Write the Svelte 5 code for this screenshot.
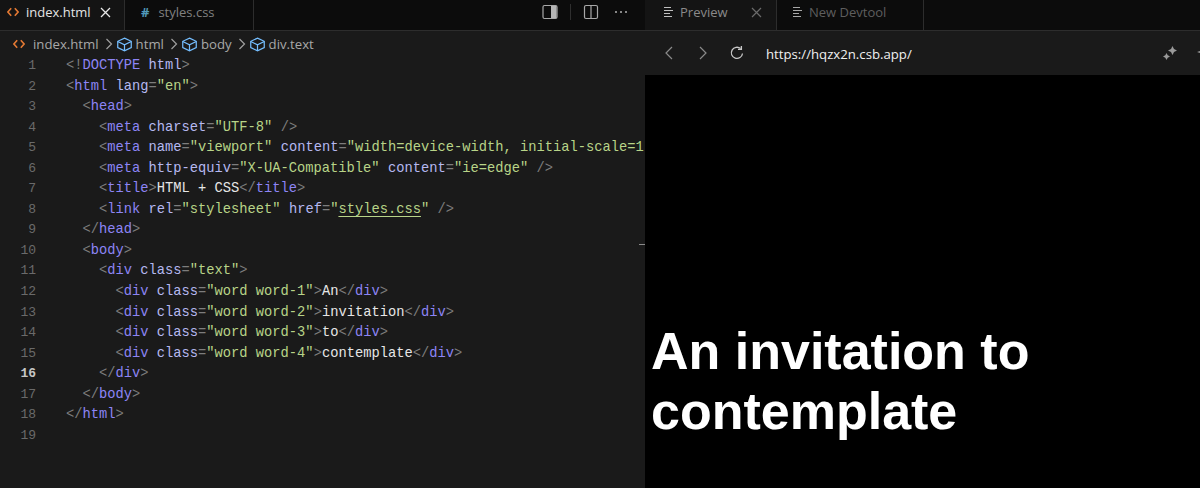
<script lang="ts">
	// token kinds: p punctuation, t tag, a attribute, s string, x plain text, u underlined string
	type Tok = [string, string];
	const lines: { indent: number; toks: Tok[] }[] = [
		{ indent: 0, toks: [['p', '<!'], ['t', 'DOCTYPE'], ['x', ' '], ['a', 'html'], ['p', '>']] },
		{ indent: 0, toks: [['p', '<'], ['t', 'html'], ['x', ' '], ['a', 'lang'], ['p', '='], ['s', '"en"'], ['p', '>']] },
		{ indent: 1, toks: [['p', '<'], ['t', 'head'], ['p', '>']] },
		{ indent: 2, toks: [['p', '<'], ['t', 'meta'], ['x', ' '], ['a', 'charset'], ['p', '='], ['s', '"UTF-8"'], ['x', ' '], ['p', '/>']] },
		{ indent: 2, toks: [['p', '<'], ['t', 'meta'], ['x', ' '], ['a', 'name'], ['p', '='], ['s', '"viewport"'], ['x', ' '], ['a', 'content'], ['p', '='], ['s', '"width=device-width, initial-scale=1.0"'], ['x', ' '], ['p', '/>']] },
		{ indent: 2, toks: [['p', '<'], ['t', 'meta'], ['x', ' '], ['a', 'http-equiv'], ['p', '='], ['s', '"X-UA-Compatible"'], ['x', ' '], ['a', 'content'], ['p', '='], ['s', '"ie=edge"'], ['x', ' '], ['p', '/>']] },
		{ indent: 2, toks: [['p', '<'], ['t', 'title'], ['p', '>'], ['x', 'HTML + CSS'], ['p', '</'], ['t', 'title'], ['p', '>']] },
		{ indent: 2, toks: [['p', '<'], ['t', 'link'], ['x', ' '], ['a', 'rel'], ['p', '='], ['s', '"stylesheet"'], ['x', ' '], ['a', 'href'], ['p', '='], ['s', '"'], ['u', 'styles.css'], ['s', '"'], ['x', ' '], ['p', '/>']] },
		{ indent: 1, toks: [['p', '</'], ['t', 'head'], ['p', '>']] },
		{ indent: 1, toks: [['p', '<'], ['t', 'body'], ['p', '>']] },
		{ indent: 2, toks: [['p', '<'], ['t', 'div'], ['x', ' '], ['a', 'class'], ['p', '='], ['s', '"text"'], ['p', '>']] },
		{ indent: 3, toks: [['p', '<'], ['t', 'div'], ['x', ' '], ['a', 'class'], ['p', '='], ['s', '"word word-1"'], ['p', '>'], ['x', 'An'], ['p', '</'], ['t', 'div'], ['p', '>']] },
		{ indent: 3, toks: [['p', '<'], ['t', 'div'], ['x', ' '], ['a', 'class'], ['p', '='], ['s', '"word word-2"'], ['p', '>'], ['x', 'invitation'], ['p', '</'], ['t', 'div'], ['p', '>']] },
		{ indent: 3, toks: [['p', '<'], ['t', 'div'], ['x', ' '], ['a', 'class'], ['p', '='], ['s', '"word word-3"'], ['p', '>'], ['x', 'to'], ['p', '</'], ['t', 'div'], ['p', '>']] },
		{ indent: 3, toks: [['p', '<'], ['t', 'div'], ['x', ' '], ['a', 'class'], ['p', '='], ['s', '"word word-4"'], ['p', '>'], ['x', 'contemplate'], ['p', '</'], ['t', 'div'], ['p', '>']] },
		{ indent: 2, toks: [['p', '</'], ['t', 'div'], ['p', '>']] },
		{ indent: 1, toks: [['p', '</'], ['t', 'body'], ['p', '>']] },
		{ indent: 0, toks: [['p', '</'], ['t', 'html'], ['p', '>']] },
		{ indent: 0, toks: [] }
	];
	const crumbs = ['html', 'body', 'div.text'];
</script>

{#snippet listIcon()}
	<svg class="list-icon" width="10" height="10" viewBox="0 0 10 10" fill="none" stroke="currentColor" stroke-width="1">
		<path d="M0 .5h7M0 3.5h9M0 6.5h6M0 9.5h8" />
	</svg>
{/snippet}

{#snippet cube()}
	<svg class="cube" width="17" height="15" viewBox="0 0 18 16" fill="none" stroke="#75beff" stroke-width="1.3">
		<path d="M9 1.2 16.2 4.6v6.6L9 14.8 1.8 11.2V4.6Z" />
		<path d="M1.8 4.8 9 8.4l7.2-3.6M9 8.4v6.2" />
	</svg>
{/snippet}

{#snippet chevron()}
	<svg class="crumb-sep" width="8" height="14" viewBox="0 0 8 14" fill="none" stroke="#a0a0a0" stroke-width="1.2">
		<path d="M1.5 2l5 5-5 5" />
	</svg>
{/snippet}

{#snippet htmlIcon()}
	<svg width="12" height="10" viewBox="0 0 12 10" fill="none" stroke="#e37933" stroke-width="1.6">
		<path d="M4.2 1.2.9 5l3.3 3.8M7.8 1.2 11.1 5 7.8 8.8" />
	</svg>
{/snippet}

<div class="window">
	<section class="editor">
		<header class="tabbar">
			<div class="tab active">
				{@render htmlIcon()}
				<span class="tab-name">index.html</span>
				<svg class="close" width="11" height="11" viewBox="0 0 11 11" stroke="#e8e8e8" stroke-width="1.3"><path d="M1 1l9 9M10 1l-9 9" /></svg>
			</div>
			<div class="tab">
				<span class="hash">#</span>
				<span class="tab-name dim">styles.css</span>
			</div>
			<div class="tab-fill">
				<svg width="16" height="16" viewBox="0 0 16 16"><rect x="1" y="1.5" width="14" height="13" rx="1.5" fill="none" stroke="#a8a8a8" stroke-width="1.2" /><rect x="9" y="2" width="5.5" height="12" fill="#b5b5b5" /></svg>
				<span class="action-sep"></span>
				<svg width="16" height="16" viewBox="0 0 16 16" fill="none" stroke="#a8a8a8" stroke-width="1.2"><rect x="1.5" y="1.5" width="13" height="13" rx="1.5" /><path d="M8 1.5v13" /></svg>
				<svg class="dots" width="14" height="4" viewBox="0 0 14 4" fill="#b0b0b0"><circle cx="2" cy="2" r="1" /><circle cx="7" cy="2" r="1" /><circle cx="12" cy="2" r="1" /></svg>
			</div>
		</header>
		<nav class="crumbs">
			{@render htmlIcon()}
			<span class="crumb first">index.html</span>
			{#each crumbs as c}
				{@render chevron()}
				{@render cube()}
				<span class="crumb">{c}</span>
			{/each}
		</nav>
		<div class="code">
			{#each lines as line, i}
				<div class="line">
					<span class="num" class:current={i === 15}>{i + 1}</span>
					<span class="src">{'  '.repeat(line.indent)}{#each line.toks as [kind, text]}<span class={kind}>{text}</span>{/each}</span>
				</div>
			{/each}
			<span class="scroll-mark"></span>
		</div>
	</section>

	<section class="preview">
		<header class="tabbar">
			<div class="tab active ptab">
				{@render listIcon()}
				<span class="tab-name muted">Preview</span>
				<svg class="pclose" width="11" height="11" viewBox="0 0 11 11" stroke="#6a6a6a" stroke-width="1.2"><path d="M1 1l9 9M10 1l-9 9" /></svg>
			</div>
			<div class="tab ptab2">
				{@render listIcon()}
				<span class="tab-name dimmer">New Devtool</span>
			</div>
		</header>
		<div class="urlbar">
			<svg width="10" height="16" viewBox="0 0 10 16" fill="none" stroke="#8a8a8a" stroke-width="1.2"><path d="M8 2 2 8l6 6" /></svg>
			<svg class="fwd" width="10" height="16" viewBox="0 0 10 16" fill="none" stroke="#8a8a8a" stroke-width="1.2"><path d="M2 2l6 6-6 6" /></svg>
			<svg class="reload" width="16" height="16" viewBox="0 0 16 16" fill="none" stroke="#c8c8c8" stroke-width="1.3">
				<path d="M13.5 8.5A5.6 5.6 0 1 1 11.6 3.6" />
				<path d="M12.4 1v3.4H9" />
			</svg>
			<span class="url">https://hqzx2n.csb.app/</span>
			<svg class="spark" width="16" height="16" viewBox="0 0 16 16" fill="#9a9a9a">
				<path d="M10.5 0 12 3 15 4.5 12 6 10.5 9 9 6 6 4.5 9 3ZM4.5 7 5.7 9.3 8 10.5 5.7 11.7 4.5 14 3.3 11.7 1 10.5 3.3 9.3Z" />
			</svg>
			<svg class="spark2" width="6" height="8" viewBox="0 0 6 8" fill="#9a9a9a"><path d="M4 0 5 3 6 4 5 5 4 8 3 5 0 4 3 3Z" /></svg>
		</div>
		<div class="page">
			<div class="headline">An invitation to contemplate</div>
		</div>
	</section>
</div>

<style>
	:global(body) {
		margin: 0;
		background: #000;
	}

	.window {
		display: flex;
		width: 1200px;
		height: 488px;
		overflow: hidden;
		font-family: 'Open Sans', 'Liberation Sans', sans-serif;
	}

	.editor {
		width: 645px;
		flex-shrink: 0;
		display: flex;
		flex-direction: column;
		background: #1a1a1a;
	}

	.preview {
		flex: 1;
		min-width: 0;
		display: flex;
		flex-direction: column;
		background: #000;
	}

	.tabbar {
		height: 30px;
		flex-shrink: 0;
		display: flex;
		background: #0c0c0c;
		border-bottom: 1px solid #2d2d2d;
	}

	.tab {
		display: flex;
		align-items: center;
		box-sizing: border-box;
		height: 30px;
		padding-bottom: 6px;
		border-right: 1px solid #2d2d2d;
		font-size: 13px;
	}

	.editor .tab.active {
		width: 125px;
		padding-left: 7px;
		background: #141414;
	}

	.editor .tab:not(.active) {
		width: 129px;
		padding-left: 16px;
	}

	.tab-name {
		color: #e4e4e4;
		margin-left: 7px;
	}

	.tab-name.dim {
		color: #808080;
		margin-left: 9px;
	}

	.tab-name.muted {
		color: #8a8a8a;
		margin-left: 6px;
	}

	.tab-name.dimmer {
		color: #5e5e5e;
		margin-left: 6px;
	}

	.close {
		margin-left: 9px;
	}

	.hash {
		color: #519aba;
		font-weight: 700;
		font-size: 13px;
	}

	.tab-fill {
		flex: 1;
		display: flex;
		align-items: center;
		justify-content: flex-end;
		padding: 0 17px 6px 0;
		gap: 12px;
	}

	.action-sep {
		width: 1px;
		height: 16px;
		background: #2f2f2f;
	}

	.dots {
		margin-left: 3px;
	}

	.crumbs {
		height: 26px;
		flex-shrink: 0;
		display: flex;
		align-items: center;
		padding-left: 13px;
		box-sizing: border-box;
		font-size: 13.2px;
		color: #a8a8a8;
	}

	.crumb.first {
		margin-left: 8px;
	}

	.crumb {
		margin-left: 3px;
	}

	.crumb-sep {
		margin: 0 3px 0 6px;
	}

	.code {
		position: relative;
		flex: 1;
		font-family: 'Liberation Mono', monospace;
		font-size: 13.75px;
		line-height: 20.55px;
		margin-top: -1px;
		overflow: hidden;
	}

	.line {
		display: flex;
		height: 20.55px;
		white-space: pre;
	}

	.num {
		width: 36px;
		text-align: right;
		color: #6a6a6a;
		flex-shrink: 0;
		font-size: 13px;
	}

	.num.current {
		color: #c6c6c6;
		font-weight: 700;
	}

	.src {
		margin-left: 30px;
	}

	.p {
		color: #7d7d7d;
	}

	.t {
		color: #8d85f5;
	}

	.a {
		color: #b5b8f0;
	}

	.s,
	.u {
		color: #b8d488;
	}

	.u {
		text-decoration: underline;
		text-underline-offset: 3px;
	}

	.x {
		color: #e6e6e6;
	}

	.scroll-mark {
		position: absolute;
		right: 0;
		top: 188px;
		width: 6px;
		height: 1px;
		background: #8a8a8a;
	}

	.ptab {
		width: 132px;
		padding-left: 19px;
		background: #141414;
		color: #c0c0c0;
	}

	.ptab2 {
		width: 147px;
		padding-left: 16px;
		color: #a8a8a8;
	}

	.pclose {
		margin-left: 23px;
	}

	.urlbar {
		height: 44px;
		flex-shrink: 0;
		box-sizing: border-box;
		display: flex;
		align-items: center;
		padding-left: 19px;
		background: #1a1a1a;
	}

	.fwd {
		margin-left: 24px;
	}

	.reload {
		margin-left: 21px;
	}

	.url {
		margin-left: 21px;
		padding-top: 1px;
		font-size: 13.2px;
		color: #f0f0f0;
	}

	.spark {
		margin-left: auto;
		margin-top: 1px;
	}

	.spark2 {
		margin: -2px -3px 0 19px;
		flex-shrink: 0;
	}

	.page {
		flex: 1;
		display: flex;
		flex-direction: column;
		justify-content: flex-end;
		padding: 0 6px 47px;
	}

	.headline {
		font-family: 'Liberation Sans', Arial, sans-serif;
		font-weight: 700;
		font-size: 52px;
		line-height: 60px;
		color: #fff;
		max-width: 400px;
	}
</style>
